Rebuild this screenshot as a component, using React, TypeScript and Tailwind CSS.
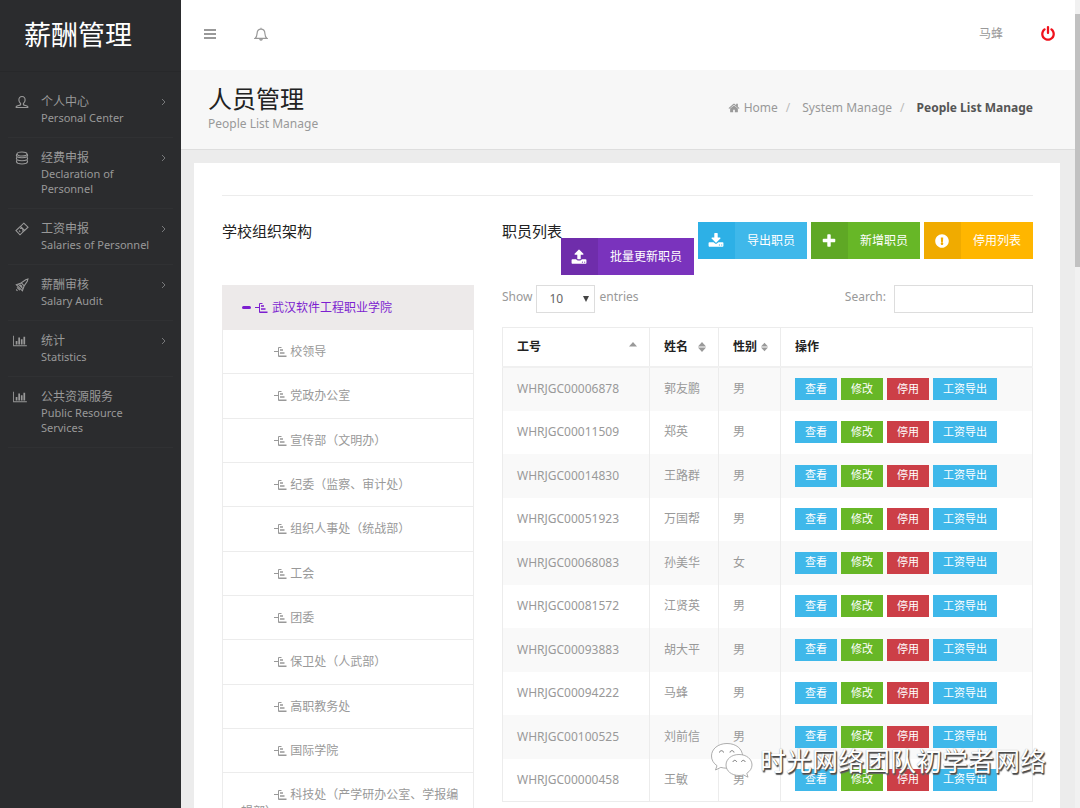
import React from 'react';
import { FaExclamationCircle } from 'react-icons/fa';

const icons = {
  chart:
    'M640 896v512h-256v-512h256zM1024 384v1024h-256v-1024h256zM2048 1536v128h-2048v-1536h128v1408h1920zM1408 640v768h-256v-768h256zM1792 256v1152h-256v-1152h256z',
  download:
    'M1344 1344q0-26-19-45t-45-19-45 19-19 45 19 45 45 19 45-19 19-45zm256 0q0-26-19-45t-45-19-45 19-19 45 19 45 45 19 45-19 19-45zm128-224v320q0 40-28 68t-68 28h-1472q-40 0-68-28t-28-68v-320q0-40 28-68t68-28h465l135 136q58 56 136 56t136-56l136-136h464q40 0 68 28t28 68zm-325-569q17 41-14 70l-448 448q-18 19-45 19t-45-19l-448-448q-31-29-14-70 17-39 59-39h256v-448q0-26 19-45t45-19h256q26 0 45 19t19 45v448h256q42 0 59 39z',
  upload:
    'M1344 1472q0-26-19-45t-45-19-45 19-19 45 19 45 45 19 45-19 19-45zm256 0q0-26-19-45t-45-19-45 19-19 45 19 45 45 19 45-19 19-45zm128-224v320q0 40-28 68t-68 28h-1472q-40 0-68-28t-28-68v-320q0-40 28-68t68-28h427q21 56 70.5 92t110.5 36h256q61 0 110.5-36t70.5-92h427q40 0 68 28t28 68zm-325-648q-17 40-59 40h-256v448q0 26-19 45t-45 19h-256q-26 0-45-19t-19-45v-448h-256q-42 0-59-40-17-39 14-69l448-448q18-19 45-19t45 19l448 448q31 30 14 69z',
  home:
    'M1472 992v480q0 26-19 45t-45 19h-384v-384h-256v384h-384q-26 0-45-19t-19-45v-480q0-1 .5-3t.5-3l575-474 575 474q1 2 1 6zm223-69l-62 74q-8 9-21 11h-3q-13 0-21-7l-692-577-692 577q-12 8-24 7-13-2-21-11l-62-74q-8-10-7-23.5t11-21.5l719-599q32-26 76-26t76 26l244 204v-195q0-14 9-23t23-9h192q14 0 23 9t9 23v408l219 182q10 8 11 21.5t-7 23.5z',
  plus:
    'M1600 736v192q0 40-28 68t-68 28h-416v416q0 40-28 68t-68 28h-192q-40 0-68-28t-28-68v-416h-416q-40 0-68-28t-28-68v-192q0-40 28-68t68-28h416v-416q0-40 28-68t68-28h192q40 0 68 28t28 68v416h416q40 0 68 28t28 68z',
  power:
    'M1664 896q0 156-61 298t-164 245-245 164-298 61-298-61-245-164-164-245-61-298q0-182 80.5-343t226.5-270q43-32 95.5-25t83.5 50q32 42 24.5 94.5t-49.5 84.5q-98 74-151.5 181t-53.5 228q0 104 40.5 198.5t109.5 163.5 163.5 109.5 198.5 40.5 198.5-40.5 163.5-109.5 109.5-163.5 40.5-198.5q0-121-53.5-228t-151.5-181q-42-32-49.5-84.5t24.5-94.5q31-43 84-50t95 25q146 109 226.5 270t80.5 343zm-640-768v640q0 52-38 90t-90 38-90-38-38-90v-640q0-52 38-90t90-38 90 38 38 90z',
};

function Glyph({ d, className, wide }: { d: string; className: string; wide?: boolean }) {
  return (
    <svg viewBox={wide ? '0 0 2048 1792' : '0 0 1792 1792'} fill="currentColor" className={className} aria-hidden="true">
      <path d={d} />
    </svg>
  );
}

function LineIcon({ children }: { children: React.ReactNode }) {
  return (
    <svg viewBox="0 0 14 14" className="size-3.5" fill="none" stroke="currentColor" strokeWidth="1.1" aria-hidden="true">
      {children}
    </svg>
  );
}

const userIcon = (
  <LineIcon>
    <path d="M7 1.500C4.900 1.500 3.800 3 3.900 5.100c.1 1.700.8 2.700 1.700 3.400v1.200c-1 .8-3.600.9-4.400 1.900v.9h11.600v-.9c-.8-1-3.400-1.100-4.400-1.900V8.500c.9-.7 1.600-1.700 1.700-3.400C10.200 3 9.100 1.500 7 1.500z" />
  </LineIcon>
);
const coinsIcon = (
  <LineIcon>
    <ellipse cx="7" cy="3" rx="5" ry="2" />
    <path d="M2 3.200C1.300 4 1.300 5 2 5.700c2.300 1.300 7.700 1.300 10 0 .7-.7.7-1.700 0-2.500M1.900 6.300c-.6.800-.6 1.700.1 2.400 2.300 1.300 7.700 1.300 10 0 .7-.7.7-1.600.1-2.400M1.900 9.300c-.9 1.200-.3 2.500 1 3 2.400.8 5.800.8 8.200 0 1.300-.5 1.900-1.800 1-3" />
  </LineIcon>
);
const ticketIcon = (
  <LineIcon>
    <path d="M8.800 1.200l4.200 4-3.400 3.200-4.200-4zM5.400 4.400L1 8.600l4 4.200 4.600-4.400" />
    <path d="M5 6.600c.8-.7 2-.6 2.600.2.7.8.6 1.800-.2 2.500" />
    <path d="M4 8.700l1.200 1.200" />
  </LineIcon>
);
const rocketIcon = (
  <LineIcon>
    <path d="M12.900 1.100l-2.200.6-4.400 3.200 2.900 2.900 3.100-4.500zM6.300 4.900L1.300 6.700l6.100 6.100 1.800-5M3.600 6.300l4 4M2 9.300l2.900 2.900M5.200 6.600l2 2" />
    <path d="M1.200 11.500l1.300 1.300" />
  </LineIcon>
);
const chartIcon = <Glyph d={icons.chart} wide className="h-3 w-3.5" />;

const menu = [
  { icon: userIcon, title: '个人中心', sub: 'Personal Center', arrow: true, line: true },
  { icon: coinsIcon, title: '经费申报', sub: 'Declaration of Personnel', arrow: true, line: true },
  { icon: ticketIcon, title: '工资申报', sub: 'Salaries of Personnel', arrow: true, line: true },
  { icon: rocketIcon, title: '薪酬审核', sub: 'Salary Audit', arrow: true, line: true },
  { icon: chartIcon, title: '统计', sub: 'Statistics', arrow: true, line: false },
  { icon: chartIcon, title: '公共资源服务', sub: 'Public Resource Services', arrow: false, line: false },
];

function Sidebar() {
  return (
    <aside className="w-[181px] shrink-0 bg-[#2b2c2e] text-[#999]">
      <div className="flex h-[72px] items-center border-b border-[#27282a] pl-6 text-[27px] text-white">薪酬管理</div>
      <nav className="px-2 pt-2.5">
        {menu.map((m) => (
          <a
            key={m.title}
            href="#"
            className={`flex border-b border-[#303133] py-3 ${m.line ? 'pl-[7px]' : 'pl-[5px]'}`}
          >
            <span className="flex h-4 w-3.5 shrink-0 items-center">{m.icon}</span>
            <span className={`min-w-0 flex-1 ${m.line ? 'pl-3' : 'pl-3.5'}`}>
              <span className="block h-4 text-xs leading-4">{m.title}</span>
              <span className="block text-[11px] leading-[15px]">{m.sub}</span>
            </span>
            <span className="w-3 shrink-0">
              {m.arrow && (
                <svg viewBox="0 0 6 8" className="mt-1 h-2 w-1.5" fill="none" stroke="#77787a" aria-hidden="true">
                  <path d="M1 1l3 3-3 3" />
                </svg>
              )}
            </span>
          </a>
        ))}
      </nav>
    </aside>
  );
}

function TopBar() {
  return (
    <header className="flex h-[70px] items-center bg-white pr-[19px] pb-0.5 pl-[23px] text-[#999]">
      <button type="button" aria-label="Menu" className="mr-[38px]">
        <svg viewBox="0 0 12 10" className="h-2.5 w-3" fill="currentColor" aria-hidden="true">
          <path d="M0 0h12v2H0zM0 4h12v2H0zM0 8h12v2H0z" />
        </svg>
      </button>
      <button type="button" aria-label="Notifications">
        <svg viewBox="0 0 14 14" className="size-3.5" fill="none" stroke="currentColor" strokeWidth="1.2" aria-hidden="true">
          <path d="M7 .8v1.400M1 11.400c1.800-1.200 2-3 2.100-5C3.200 3.700 4.900 2.200 7 2.200s3.800 1.500 3.900 4.200c.1 2 .3 3.800 2.100 5z" />
          <path d="M5.600 12.200c.3 1.300 2.500 1.300 2.800 0" fill="currentColor" />
        </svg>
      </button>
      <span className="ml-auto text-xs">马蜂</span>
      <button type="button" aria-label="Log out" className="ml-[37px] text-[#f0121c]">
        <Glyph d={icons.power} className="size-4" />
      </button>
    </header>
  );
}

function TitleBar() {
  return (
    <div className="flex h-20 justify-between border-b border-[#dedede] bg-[#f7f7f7] pr-[42px] pl-[27px]">
      <div className="pt-3">
        <h1 className="text-2xl leading-[34px] text-[#222]">人员管理</h1>
        <p className="text-xs leading-4 text-[#999]">People List Manage</p>
      </div>
      <nav aria-label="Breadcrumb" className="flex h-[75px] items-center text-xs text-[#999]">
        <Glyph d={icons.home} className="mr-1 size-3" />
        <a href="#">Home</a>
        <span className="mr-3 ml-2 text-[#bbb]">/</span>
        <a href="#">System Manage</a>
        <span className="mr-3 ml-2 text-[#bbb]">/</span>
        <strong className="text-[#555]">People List Manage</strong>
      </nav>
    </div>
  );
}

function BranchIcon() {
  return (
    <svg viewBox="0 0 13 12" className="inline-block h-3 w-[13px] align-[-2px]" fill="none" stroke="currentColor" aria-hidden="true">
      <path d="M0 5.500h4M7.500 1.500H4.500v9" />
      <path d="M6 4h3M6 7h4.500M4.500 10.200H12.500" strokeWidth="1.600" />
    </svg>
  );
}

const departments = [
  '校领导',
  '党政办公室',
  '宣传部（文明办）',
  '纪委（监察、审计处）',
  '组织人事处（统战部）',
  '工会',
  '团委',
  '保卫处（人武部）',
  '高职教务处',
  '国际学院',
  '科技处（产学研办公室、学报编辑部）',
];

function OrgTree() {
  return (
    <section>
      <h2 className="text-[15px] leading-[18px] text-[#222]">学校组织架构</h2>
      <ul className="mt-[45px] border border-[#ececec] text-xs text-[#999]">
        <li className="-mx-px -mt-px flex h-[45px] items-center bg-[#edeaea] pl-5 text-[#7d1fd0]">
          <span className="mr-1 h-[3px] w-[9px] rounded-sm bg-[#7d1fd0]" />
          <BranchIcon />
          <span className="ml-1">武汉软件工程职业学院</span>
        </li>
        {departments.map((d) => (
          <li
            key={d}
            className="min-h-11 border-b border-[#ececec] py-[13px] pr-2 pl-[18px] indent-[33px] leading-[17px] nth-[3n]:min-h-[45px]"
          >
            <BranchIcon /> {d}
          </li>
        ))}
      </ul>
    </section>
  );
}

const actions = [
  { label: '批量更新职员', icon: <Glyph d={icons.upload} className="size-4" />, bg: 'mt-4 bg-[#7a33bd]', dark: 'bg-[#6f2dab]' },
  { label: '导出职员', icon: <Glyph d={icons.download} className="size-4" />, bg: 'bg-[#3fb8ea]', dark: 'bg-[#2db0e6]' },
  { label: '新增职员', icon: <Glyph d={icons.plus} className="size-4" />, bg: 'bg-[#67b727]', dark: 'bg-[#5fa825]' },
  { label: '停用列表', icon: <FaExclamationCircle className="size-3.5" />, bg: 'bg-[#ffb600]', dark: 'bg-[#f0ab00]' },
];

const people = [
  ['WHRJGC00006878', '郭友鹏', '男'],
  ['WHRJGC00011509', '郑英', '男'],
  ['WHRJGC00014830', '王路群', '男'],
  ['WHRJGC00051923', '万国帮', '男'],
  ['WHRJGC00068083', '孙美华', '女'],
  ['WHRJGC00081572', '江贤英', '男'],
  ['WHRJGC00093883', '胡大平', '男'],
  ['WHRJGC00094222', '马蜂', '男'],
  ['WHRJGC00100525', '刘前信', '男'],
  ['WHRJGC00000458', '王敏', '男'],
];

const rowActions = [
  { label: '查看', bg: 'bg-[#3fb8ea]' },
  { label: '修改', bg: 'bg-[#67b727]' },
  { label: '停用', bg: 'bg-[#cc3f47]' },
  { label: '工资导出', bg: 'bg-[#3fb8ea]' },
];

function SortIcon({ both }: { both?: boolean }) {
  return (
    <svg viewBox="0 0 8 10" className="h-2.5 w-2" fill="#999" aria-hidden="true">
      <path d="M4 0l4 4.400H0z" />
      {both && <path d="M4 10l4-4.400H0z" />}
    </svg>
  );
}

function StaffList() {
  return (
    <section className="min-w-0">
      <div className="flex gap-1">
        <h2 className="-mr-1 min-w-0 flex-1 text-[15px] leading-[18px] whitespace-nowrap text-[#222]">职员列表</h2>
        {actions.map((a) => (
          <button key={a.label} type="button" className={`flex h-[37px] shrink-0 items-center text-xs text-white ${a.bg}`}>
            <span className={`flex h-full w-[37px] items-center justify-center ${a.dark}`}>{a.icon}</span>
            <span className="px-3">{a.label}</span>
          </button>
        ))}
      </div>
      <div className="mt-2.5 flex justify-between text-xs leading-6 text-[#999]">
        <label className="flex">
          Show
          <span className="relative mx-1 h-7">
            <select className="h-7 w-[59px] appearance-none border border-[#ddd] bg-white pl-3 text-xs text-[#666]" defaultValue="10">
              <option>10</option>
              <option>25</option>
              <option>50</option>
            </select>
            <svg viewBox="0 0 6 6" className="pointer-events-none absolute top-[11px] right-1.5 size-1.5" fill="#444" aria-hidden="true">
              <path d="M0 0h6L3 6z" />
            </svg>
          </span>
          entries
        </label>
        <label className="flex">
          Search:
          <input type="search" className="ml-2 h-7 w-[139px] border border-[#ddd] bg-white px-2 text-xs" />
        </label>
      </div>
      <table className="mt-3.5 w-full table-fixed border-collapse border border-[#ececec] text-left text-xs text-[#999]">
        <colgroup>
          <col className="w-[147px]" />
          <col className="w-[69px]" />
          <col className="w-[62px]" />
          <col />
        </colgroup>
        <thead className="border-b-2 border-[#f0f0f0] text-[#222]">
          <tr className="h-[39px]">
            <th className="border-r border-[#ececec] pr-3 pl-3.5 font-semibold">
              <span className="flex items-center justify-between">工号<SortIcon /></span>
            </th>
            <th className="border-r border-[#ececec] pr-3 pl-3.5 font-semibold">
              <span className="flex items-center justify-between">姓名<SortIcon both /></span>
            </th>
            <th className="border-r border-[#ececec] pr-3 pl-3.5 font-semibold">
              <span className="flex items-center justify-between gap-1 whitespace-nowrap">性别<SortIcon both /></span>
            </th>
            <th className="pl-3.5 font-semibold">操作</th>
          </tr>
        </thead>
        <tbody>
          {people.map(([id, name, sex]) => (
            <tr key={id} className="h-11 odd:bg-[#f9f9f9] even:h-[43px]">
              <td className="border-r border-[#ececec] pl-3.5">{id}</td>
              <td className="border-r border-[#ececec] pl-3.5">{name}</td>
              <td className="border-r border-[#ececec] pl-3.5">{sex}</td>
              <td className="pl-3.5">
                <div className="flex gap-1">
                  {rowActions.map((a) => (
                    <button key={a.label} type="button" className={`h-[22px] px-2.5 text-[11px] text-white ${a.bg}`}>
                      {a.label}
                    </button>
                  ))}
                </div>
              </td>
            </tr>
          ))}
        </tbody>
      </table>
    </section>
  );
}

function Watermark() {
  return (
    <div className="pointer-events-none absolute right-[34px] bottom-7 flex items-center gap-1.5">
      <svg viewBox="0 0 44 38" className="h-[38px] w-11" fill="#fff" stroke="#999" strokeWidth=".8" aria-hidden="true">
        <path d="M17 1.500C8 1.500 1.500 7 1.500 14c0 4 2 7.300 5.500 9.700L5.500 28l5.300-2.600c2 .5 4 .8 6.200.8 9 0 15.500-5 15.500-12.200S26 1.500 17 1.500z" />
        <path d="M29 12.500c-7.500 0-13 4.600-13 10.500s5.500 10.500 13 10.500c1.600 0 3-.2 4.500-.6l4.500 2.300-1.200-3.900c3.200-2 5.200-5 5.200-8.300 0-5.900-5.500-10.500-13-10.500z" />
        <g fill="none" stroke="#777" strokeWidth="1">
          <path d="M9.500 10.500c.2-2.400 3.800-2.400 4 0M20 10.500c.2-2.400 3.800-2.400 4 0" />
          <path d="M23 20c.2-2.200 3.400-2.200 3.600 0M31.500 20c.2-2.200 3.400-2.200 3.600 0" />
        </g>
      </svg>
      <span className="text-[26px] leading-9 text-white [text-shadow:1px_1px_1px_#444,1px_2px_1px_#666,0_0_1px_#999]">
        时光网络团队初学者网络
      </span>
    </div>
  );
}

export default function App() {
  return (
    <div className="relative flex h-screen overflow-hidden bg-[#ececec] font-['Noto_Sans','Noto_Sans_CJK_SC',sans-serif]">
      <Sidebar />
      <main className="min-w-0 flex-1">
        <TopBar />
        <TitleBar />
        <div className="pt-[13px] pr-[15px] pl-[13px]">
          <div className="bg-white pt-8 pr-[27px] pl-7">
            <hr className="border-[#ececec]" />
            <div className="mt-[26px] grid grid-cols-[252fr_531fr] gap-7">
              <OrgTree />
              <StaffList />
            </div>
          </div>
        </div>
      </main>
      <div className="w-[5px] shrink-0 bg-[#f1f1f1] pt-3.5">
        <div className="h-[253px] bg-[#c1c1c1]" />
      </div>
      <Watermark />
    </div>
  );
}
